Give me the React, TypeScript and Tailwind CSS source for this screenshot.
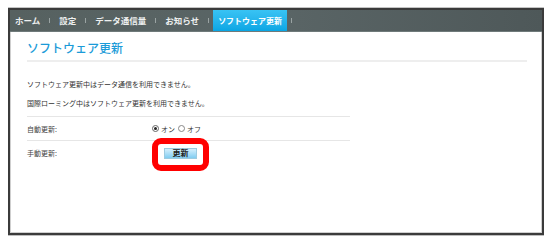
const jp = "font-['Noto_Sans_CJK_JP',sans-serif]";

function Sep() {
  return <span className="w-px h-[5px] bg-[#9aa3a3]" />;
}

export default function App() {
  return (
    <div className={`w-[552px] h-[243px] bg-white pl-[8px] pt-[7px] ${jp}`}>
      {/* Frame */}
      <div className="w-[536px] h-[229px] border-t border-t-[#c4c4c4] border-b border-b-[#bdbdbd]">
        <div className="h-full bg-[#3b3b3b] px-[2px] pt-[2px] pb-[2px]">
          <div className="h-full bg-white border-x border-b border-[#cfcfcf] flex flex-col">
            {/* Nav */}
            <div className="h-[22px] -mx-px flex items-stretch bg-gradient-to-r from-[#566160] via-[#5a6566] to-[#4e5859] border-b border-[#6f7a7a] text-[8.5px] font-bold text-[#eef0f0]">
              <div className="flex items-center gap-[9px] pl-[5px] pr-[4px]">
                <span>ホーム</span>
                <Sep />
                <span>設定</span>
                <Sep />
                <span>データ通信量</span>
                <Sep />
                <span>お知らせ</span>
                <Sep />
              </div>
              <div className="flex items-center px-[5px] bg-gradient-to-b from-[#38c3f4] to-[#08a6e4] text-white text-[8px]">
                ソフトウェア更新
              </div>
              <div className="flex items-center pl-[4px]">
                <Sep />
              </div>
            </div>

            {/* Content */}
            <div className="pl-[16px] pr-[14px]">
              <h1 className="pt-[7px] pb-[3px] text-[12px] leading-[18px] font-medium text-[#1b9bd8] border-b-2 border-[#eeeeee]">
                ソフトウェア更新
              </h1>
              <div className="w-[323px] text-[7px] leading-[12px] text-[#333]">
                <p className="mt-[16px]">ソフトウェア更新中はデータ通信を利用できません。</p>
                <p className="mt-[7px] pb-[7px] border-b border-[#e6e6e6]">
                  国際ローミング中はソフトウェア更新を利用できません。
                </p>
                <div className="h-[24px] flex items-center border-b border-[#e6e6e6]">
                  <span className="w-[125px] text-[#444]">自動更新:</span>
                  <div className="flex items-center">
                    <span className="w-[7px] h-[7px] rounded-full border border-[#666] bg-white flex items-center justify-center">
                      <span className="w-[3px] h-[3px] rounded-full bg-[#222]" />
                    </span>
                    <span className="ml-[2px]">オン</span>
                    <span className="ml-[3px] w-[7px] h-[7px] rounded-full border border-[#888] bg-white" />
                    <span className="ml-[2px]">オフ</span>
                  </div>
                </div>
                <div className="h-[24px] flex items-center">
                  <span className="w-[137px] text-[#444]">手動更新:</span>
                  <div className="relative">
                    <button className="w-[33px] h-[11px] flex items-center justify-center bg-gradient-to-b from-[#d4effc] to-[#7fcdf1] border border-[#9ccbe0] text-[8px] font-bold text-[#222] leading-none">
                      更新
                    </button>
                    <div className="absolute -left-[12px] -right-[12px] -top-[10px] -bottom-[12px] rounded-[9px] border-[6px] border-[#ff0000]" />
                  </div>
                </div>
              </div>
            </div>
          </div>
        </div>
      </div>
    </div>
  );
}
